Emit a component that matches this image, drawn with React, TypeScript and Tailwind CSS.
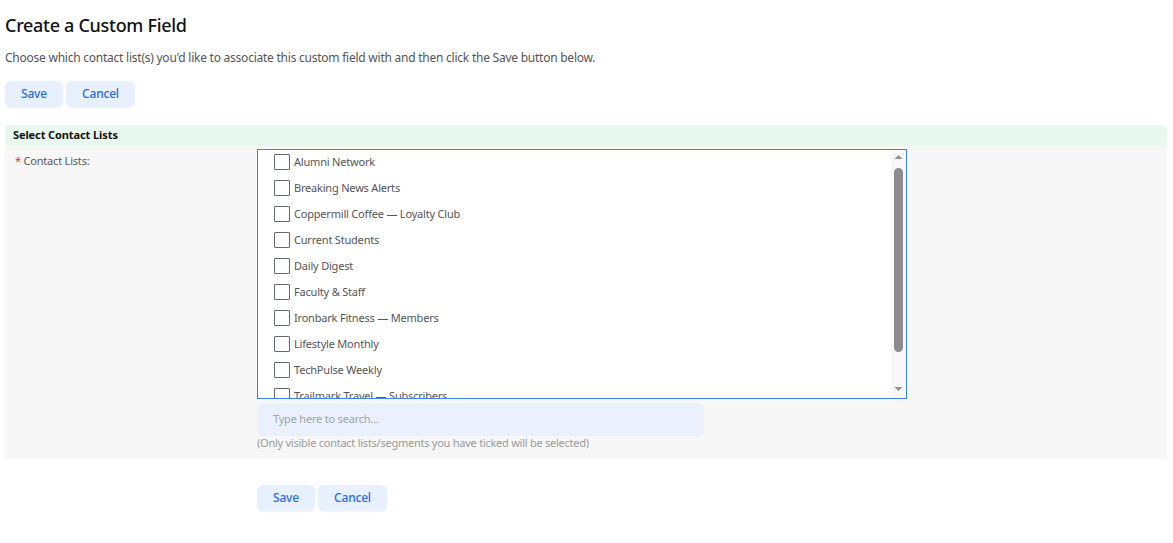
import React from "react";

const lists = [
  "Alumni Network",
  "Breaking News Alerts",
  "Coppermill Coffee — Loyalty Club",
  "Current Students",
  "Daily Digest",
  "Faculty & Staff",
  "Ironbark Fitness — Members",
  "Lifestyle Monthly",
  "TechPulse Weekly",
  "Trailmark Travel — Subscribers",
  "Weekend Roundup",
];

function Btn({ children, w }: { children: React.ReactNode; w: string }) {
  return (
    <button
      className={`h-[26px] ${w} rounded-[6px] bg-[#e8f0fe] text-[#2d6bd6] text-[12px] font-medium tracking-[-0.2px] shadow-[0_1px_2px_rgba(0,0,0,0.06)]`}
    >
      {children}
    </button>
  );
}

export default function App() {
  return (
    <div
      className="bg-white min-h-[543px] px-[5px] pt-[13px] text-[#444]"
      style={{ fontFamily: '"Noto Sans", "Open Sans", sans-serif' }}
    >
      <h1 className="text-[18px] font-medium text-[#111] leading-[24px] tracking-[-0.3px]">Create a Custom Field</h1>
      <p className="mt-[13px] text-[12px] leading-[16px] text-[#555] tracking-[-0.24px]">
        Choose which contact list(s) you'd like to associate this custom field with and then click the Save button below.
      </p>
      <div className="mt-[15px] flex gap-[3px]">
        <Btn w="w-[58px]">Save</Btn>
        <Btn w="w-[69px]">Cancel</Btn>
      </div>

      <div className="mt-[18px] w-[1162px]">
        <div className="h-[21px] bg-[#e9f8ee] rounded-tr-[6px] px-[8px] flex items-center text-[11px] font-bold text-[#111] tracking-[-0.1px]">
          Select Contact Lists
        </div>
        <div className="bg-[#f7f7f7] h-[313px] flex pt-[3px]">
          <div className="w-[252px] pl-[10px] pt-[4px] text-[11px] text-[#5a5a5a] tracking-[-0.2px]">
            <span className="text-[#d33]">*</span> Contact Lists:
          </div>
          <div className="flex flex-col">
            <div className="w-[650px] h-[250px] border border-[#3b82f6] bg-white flex">
              <div className="flex-1 overflow-hidden">
                <div className="-mt-[1px]">
                  {lists.map((l) => (
                    <div key={l} className="h-[26px] flex items-center pl-[16px]">
                      <span className="w-[16px] h-[16px] border border-[#666a73] rounded-[1px] bg-white mr-[4px]" />
                      <span className="text-[11px] text-[#555] tracking-[-0.2px]">{l}</span>
                    </div>
                  ))}
                </div>
              </div>
              <div className="w-[15px] bg-[#f8f8f8] flex flex-col items-center">
                <svg width="15" height="14" viewBox="0 0 15 14" className="shrink-0">
                  <path d="M3.5 9 L7.5 5 L11.5 9 Z" fill="#8f8f8f" />
                </svg>
                <div className="w-[9px] h-[184px] mt-[4px] rounded-full bg-[#8c8c8c]" />
                <div className="flex-1" />
                <svg width="15" height="14" viewBox="0 0 15 14" className="shrink-0 mb-[2px]">
                  <path d="M3.5 5 L11.5 5 L7.5 9 Z" fill="#8f8f8f" />
                </svg>
              </div>
            </div>
            <div className="mt-[4px] w-[447px] h-[33px] rounded-[6px] bg-[#eaf1fd] flex items-center px-[16px] text-[11px] text-[#9ea3aa] tracking-[-0.2px]">
              Type here to search...
            </div>
            <div className="mt-[0px] text-[11px] leading-[14px] text-[#9a9a9a] tracking-[-0.25px]">
              (Only visible contact lists/segments you have ticked will be selected)
            </div>
          </div>
        </div>
      </div>

      <div className="mt-[26px] pl-[252px] flex gap-[3px]">
        <Btn w="w-[58px]">Save</Btn>
        <Btn w="w-[69px]">Cancel</Btn>
      </div>
    </div>
  );
}
